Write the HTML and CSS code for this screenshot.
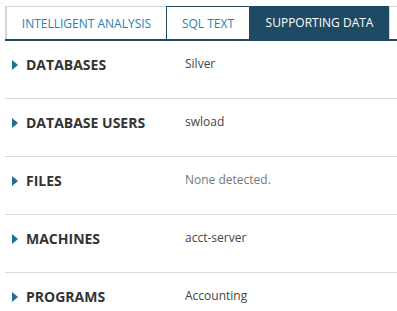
FILE: index.html
```html
<!DOCTYPE html>
<html lang="en">
<head>
    <meta charset="UTF-8">
    <meta name="viewport" content="width=device-width, initial-scale=1.0">
    <title>Supporting Data</title>
    <link rel="stylesheet" href="styles.css">
</head>
<body>

    <!-- Tabs -->
    <div class="tabs">
        <div class="tab tab-first">INTELLIGENT ANALYSIS</div>
        <div class="tab tab-outline">SQL TEXT</div>
        <div class="tab tab-active">SUPPORTING DATA</div>
        <div class="tab-rest"></div>
    </div>

    <!-- Supporting data rows -->
    <div class="rows">
        <div class="row">
            <div class="row-label"><span class="arrow"></span>DATABASES</div>
            <div class="row-value">Silver</div>
        </div>
        <div class="row">
            <div class="row-label"><span class="arrow"></span>DATABASE USERS</div>
            <div class="row-value">swload</div>
        </div>
        <div class="row">
            <div class="row-label"><span class="arrow"></span>FILES</div>
            <div class="row-value muted">None detected.</div>
        </div>
        <div class="row">
            <div class="row-label"><span class="arrow"></span>MACHINES</div>
            <div class="row-value">acct-server</div>
        </div>
        <div class="row">
            <div class="row-label"><span class="arrow"></span>PROGRAMS</div>
            <div class="row-value">Accounting</div>
        </div>
    </div>

</body>
</html>
```

FILE: styles.css
```css
body {
    margin: 0;
    font-family: 'Open Sans', sans-serif;
    background-color: #FFFFFF;
    color: #333333;
    padding: 6px 0 0 5px;
}

/* Tabs */
.tabs {
    display: flex;
    border-bottom: 2px solid #1F4A63;
}

.tab {
    height: 33px;
    display: flex;
    align-items: center;
    justify-content: center;
    font-size: 12px;
    box-sizing: border-box;
}

.tab-first {
    width: 161px;
    color: #1E86AD;
    border-top: 1px solid #D6D6D6;
    border-left: 2px solid #D6D6D6;
}

.tab-outline {
    width: 84px;
    color: #1E86AD;
    border: 1px solid #1F4A63;
    border-bottom: none;
}

.tab-active {
    width: 139px;
    color: #FFFFFF;
    background-color: #1F4A63;
}

.tab-rest {
    flex-grow: 1;
    border-top: 1px solid #D6D6D6;
    border-left: 1px solid #D6D6D6;
}

/* Rows */
.row {
    display: flex;
    height: 58px;
    box-sizing: border-box;
    padding-top: 16px;
    border-bottom: 1px solid #D9D9D9;
}

.row:last-child {
    height: 36px;
    border-bottom: none;
}

.row-label {
    width: 180px;
    font-size: 14px;
    font-weight: bold;
    color: #333333;
    display: flex;
    align-items: center;
    height: 18px;
    margin-top: -2px;
}

.arrow {
    width: 0;
    height: 0;
    border-top: 5px solid transparent;
    border-bottom: 5px solid transparent;
    border-left: 6px solid #1F6F8F;
    margin: 2px 8px 0 7px;
}

.row-value {
    font-size: 12px;
    color: #444444;
    line-height: 16px;
    margin-top: -1px;
}

.muted {
    color: #777777;
}
```
